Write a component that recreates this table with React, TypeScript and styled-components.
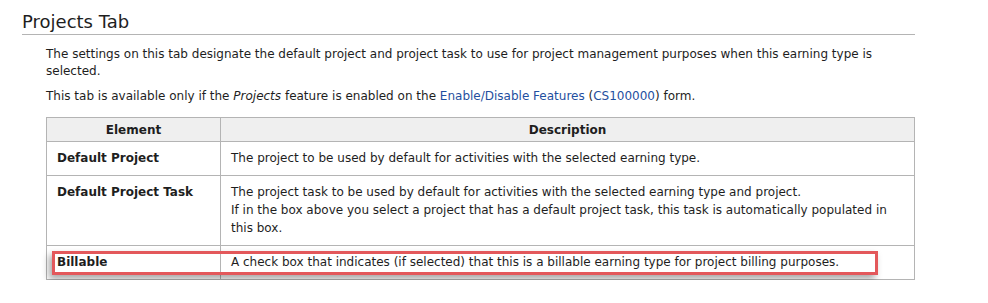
import styled, { createGlobalStyle } from 'styled-components';

const GlobalStyle = createGlobalStyle`
  body {
    margin: 0;
    background: #ffffff;
    font-family: 'DejaVu Sans', Verdana, sans-serif;
    color: #1e1e1e;
  }
`;

const Page = styled.div`
  padding: 10px 73px 0 22px;
`;

const Heading = styled.h2`
  margin: 0;
  font-size: 18px;
  font-weight: normal;
  line-height: 24px;
  color: #1e1e1e;
  border-bottom: 1px solid #b4b4b4;
`;

const Body = styled.div`
  padding: 11px 0 0 24px;
  font-size: 12px;
  line-height: 17px;
`;

const Para = styled.p`
  margin: 0 0 8px 0;
`;

const Link = styled.a`
  color: #1f4fa0;
  text-decoration: none;
`;

const Table = styled.table`
  margin-top: 12px;
  width: 100%;
  border-collapse: collapse;
  font-size: 12px;
  line-height: 18px;
`;

const HeadCell = styled.th`
  background: #efefef;
  border: 1px solid #b4b4b4;
  padding: 3px 10px 2px 10px;
  font-weight: bold;
  text-align: center;
`;

const Row = styled.tr`
  position: relative;
`;

const Cell = styled.td<{ $name?: boolean }>`
  border: 1px solid #b4b4b4;
  padding: 7px 10px 8px 10px;
  vertical-align: top;
  width: ${(p) => (p.$name ? '153px' : 'auto')};
  font-weight: ${(p) => (p.$name ? 'bold' : 'normal')};
  position: relative;
`;

const Highlight = styled.div`
  position: absolute;
  left: 5px;
  top: 5px;
  width: 820px;
  height: 18px;
  border: 3px solid #e3585b;
  box-shadow: -3px 4px 7px rgba(0, 0, 0, 0.35);
  pointer-events: none;
`;

const rows = [
  {
    name: 'Default Project',
    desc: ['The project to be used by default for activities with the selected earning type.'],
  },
  {
    name: 'Default Project Task',
    desc: [
      'The project task to be used by default for activities with the selected earning type and project.',
      'If in the box above you select a project that has a default project task, this task is automatically populated in this box.',
    ],
  },
];

export default function App() {
  return (
    <>
      <GlobalStyle />
      <Page>
        <Heading>Projects Tab</Heading>
        <Body>
          <Para>
            The settings on this tab designate the default project and project task to use for project management
            purposes when this earning type is selected.
          </Para>
          <Para>
            This tab is available only if the <i>Projects</i> feature is enabled on the{' '}
            <Link href="#">Enable/Disable Features</Link> (<Link href="#">CS100000</Link>) form.
          </Para>
          <Table>
            <thead>
              <tr>
                <HeadCell>Element</HeadCell>
                <HeadCell>Description</HeadCell>
              </tr>
            </thead>
            <tbody>
              {rows.map((r) => (
                <Row key={r.name}>
                  <Cell $name>{r.name}</Cell>
                  <Cell>
                    {r.desc.map((d, i) => (
                      <div key={i}>{d}</div>
                    ))}
                  </Cell>
                </Row>
              ))}
              <Row>
                <Cell $name>
                  Billable
                  <Highlight />
                </Cell>
                <Cell>A check box that indicates (if selected) that this is a billable earning type for project billing purposes.</Cell>
              </Row>
            </tbody>
          </Table>
        </Body>
      </Page>
    </>
  );
}
